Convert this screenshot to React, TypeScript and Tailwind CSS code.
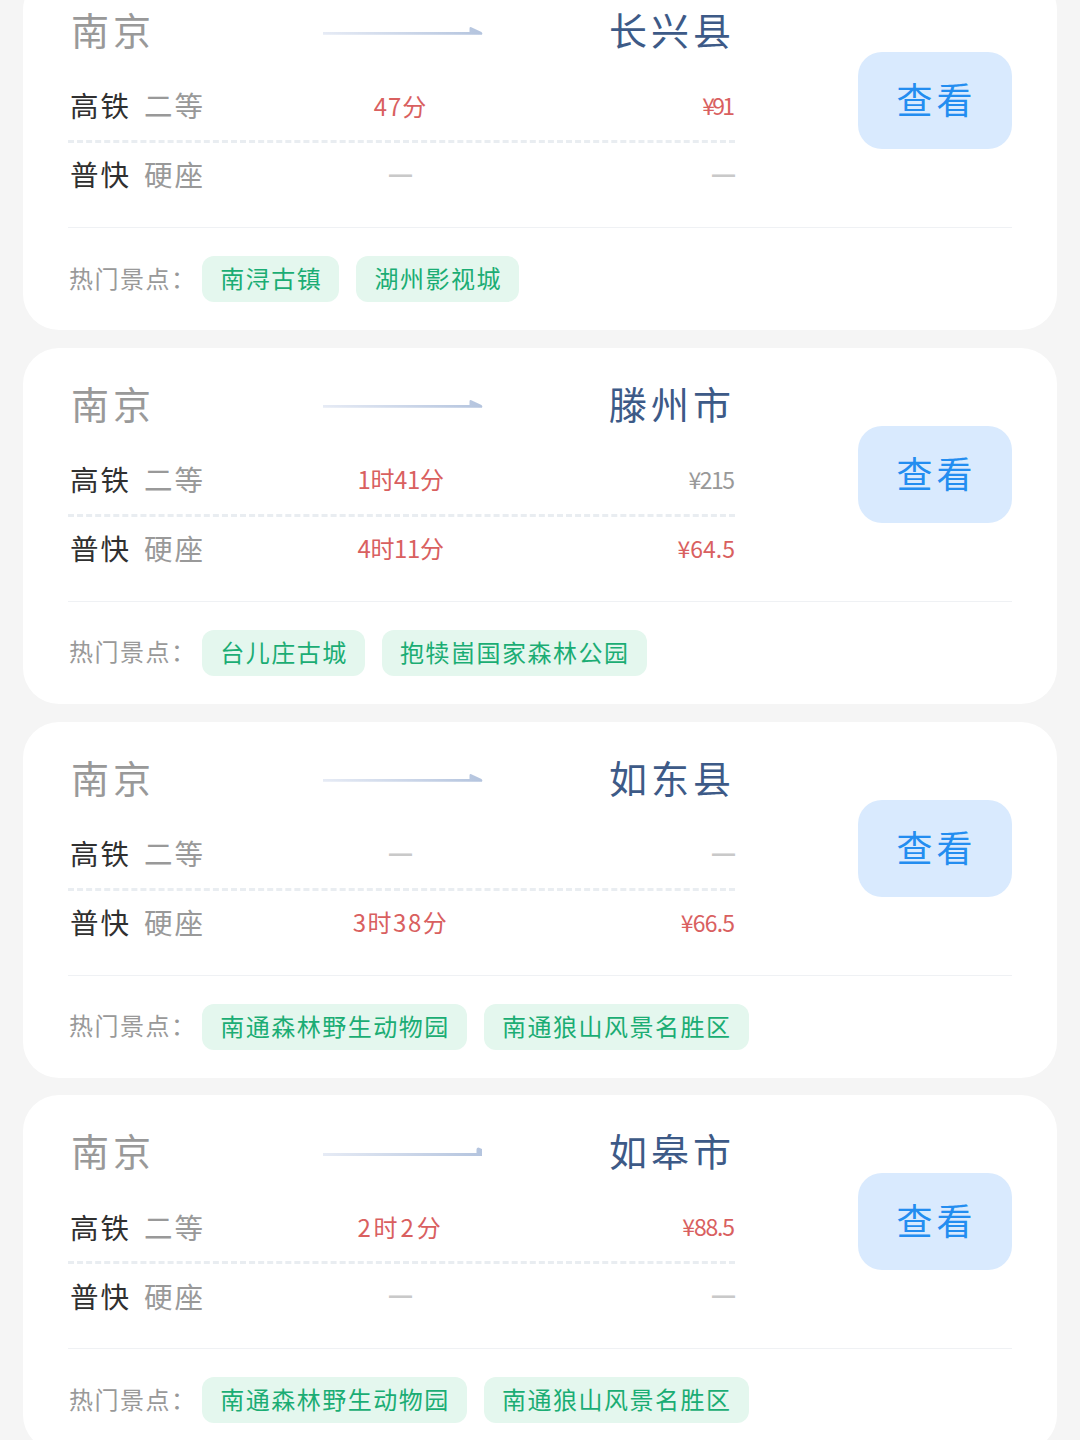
type Value = { text: string; className: string };

type Route = {
  to: string;
  fastTime?: Value;
  fastPrice?: Value;
  slowTime?: Value;
  slowPrice?: Value;
  spots: string[];
  bluntArrow?: boolean;
};

const routes: Route[] = [
  {
    to: "长兴县",
    fastTime: { text: "47分", className: "text-[24px] text-[#d9605f] tracking-[1px]" },
    fastPrice: { text: "¥91", className: "text-[23px] text-[#d9605f] tracking-[-2.8px] mr-[2.8px]" },
    spots: ["南浔古镇", "湖州影视城"],
  },
  {
    to: "滕州市",
    fastTime: { text: "1时41分", className: "text-[24px] text-[#d9605f] tracking-[-0.4px]" },
    fastPrice: { text: "¥215", className: "text-[23px] text-[#999999] tracking-[-1.5px] mr-[1.5px]" },
    slowTime: { text: "4时11分", className: "text-[24px] text-[#d9605f] tracking-[-0.4px]" },
    slowPrice: { text: "¥64.5", className: "text-[23px] text-[#d9605f]" },
    spots: ["台儿庄古城", "抱犊崮国家森林公园"],
  },
  {
    to: "如东县",
    slowTime: { text: "3时38分", className: "text-[24px] text-[#d9605f] tracking-[1.5px]" },
    slowPrice: { text: "¥66.5", className: "text-[23px] text-[#d9605f] tracking-[-0.8px] mr-[0.8px]" },
    spots: ["南通森林野生动物园", "南通狼山风景名胜区"],
  },
  {
    to: "如皋市",
    fastTime: { text: "2时2分", className: "text-[24px] text-[#d9605f] tracking-[2.9px]" },
    fastPrice: { text: "¥88.5", className: "text-[23px] text-[#d9605f] tracking-[-1.2px] mr-[1.2px]" },
    spots: ["南通森林野生动物园", "南通狼山风景名胜区"],
    bluntArrow: true,
  },
];

function Arrow({ id, blunt }: { id: string; blunt?: boolean }) {
  return (
    <svg width="160" height="10" viewBox="0 0 160 10" className="mt-[3px] ml-[2px]">
      <defs>
        <linearGradient id={id} gradientUnits="userSpaceOnUse" x1="0" y1="0" x2="160" y2="0">
          <stop offset="0" stopColor="#e6ebf5" />
          <stop offset="1" stopColor="#b4c4de" />
        </linearGradient>
      </defs>
      <path
        d={
          blunt
            ? "M0 6H153.5V2.5Q153.5 .5 155.5 .5L159 2V9H0Z"
            : "M0 6H146.5V2.5Q146.5 .8 148.3 1.2L158.5 6Q160 7 159 8.8H0Z"
        }
        fill={`url(#${id})`}
      />
    </svg>
  );
}

function Cell({ value }: { value?: Value }) {
  if (!value) {
    return (
      <span className="font-['Liberation_Sans'] text-[23px] font-bold text-[#c9c9c9]">—</span>
    );
  }
  return <span className={value.className}>{value.text}</span>;
}

function FareRow({ train, seat, time, price }: { train: string; seat: string; time?: Value; price?: Value }) {
  return (
    <div className="grid h-[66px] grid-cols-[219px_227px_221px] items-center pb-[3px] leading-none">
      <div className="flex gap-[13px] pl-[2px] text-[28.5px] tracking-[2px]">
        <span className="text-[#303030]">{train}</span>
        <span className="text-[#999999]">{seat}</span>
      </div>
      <div className="text-center">
        <Cell value={time} />
      </div>
      <div className="text-right">
        <Cell value={price} />
      </div>
    </div>
  );
}

function RouteCard({ route, id }: { route: Route; id: string }) {
  return (
    <article className="h-[356px] shrink-0 rounded-[36px] bg-white px-[45px]">
      <div className="flex h-[253px] items-start justify-between">
        <div className="w-[667px] pt-[30px]">
          <div className="grid h-[50px] grid-cols-[220px_227px_220px] items-center leading-none">
            <span className="pl-[3px] text-[38px] tracking-[4px] text-[#999999]">南京</span>
            <div className="flex justify-center">
              <Arrow id={id} blunt={route.bluntArrow} />
            </div>
            <span className="text-right text-[38px] tracking-[4px] text-[#3d5a87]">
              {route.to}
            </span>
          </div>
          <div className="pt-[20px]">
            <FareRow train="高铁" seat="二等" time={route.fastTime} price={route.fastPrice} />
            <div className="border-t-[3px] border-dashed border-[#e9edf1]" />
            <FareRow train="普快" seat="硬座" time={route.slowTime} price={route.slowPrice} />
          </div>
        </div>
        <button className="mt-[78px] h-[97px] w-[154px] rounded-[24px] bg-[#d9eafe] pb-[5px] pl-[3px] text-[36px] leading-none tracking-[4px] text-[#238df0]">
          查看
        </button>
      </div>
      <div className="flex items-center gap-[17px] border-t border-[#eff1f4] pt-[28px]">
        <span className="-mr-[12px] w-[129px] pb-[3px] pl-[1px] text-[24px] leading-none tracking-[1.5px] whitespace-nowrap text-[#999999]">
          热门景点：
        </span>
        {route.spots.map((spot) => (
          <span
            key={spot}
            className="flex h-[46px] items-center rounded-[12px] bg-[#e4f7ee] pr-[17px] pb-[2px] pl-[18.3px] text-[24px] leading-none tracking-[1.5px] whitespace-nowrap text-[#1bad74]"
          >
            {spot}
          </span>
        ))}
      </div>
    </article>
  );
}

export default function App() {
  return (
    <main className="h-[1440px] w-[1080px] overflow-hidden bg-[#f5f5f5] px-[23px] font-['Noto_Sans_CJK_SC',sans-serif]">
      <div className="-mt-[26px] flex flex-col gap-[17.8px]">
        {routes.map((route, i) => (
          <RouteCard key={route.to} route={route} id={`arrow-${i}`} />
        ))}
      </div>
    </main>
  );
}
